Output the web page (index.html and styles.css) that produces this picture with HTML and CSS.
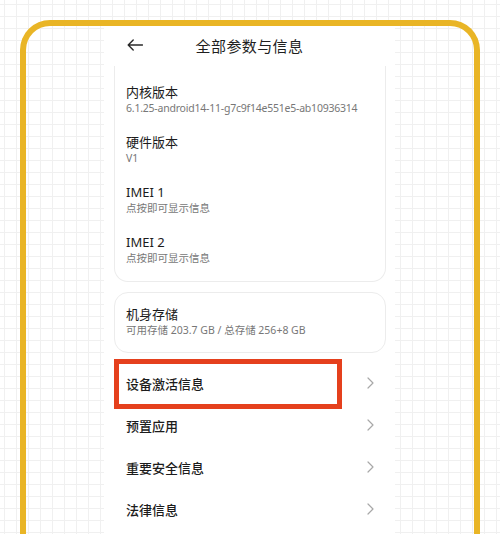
FILE: index.html
```html
<!DOCTYPE html>
<html lang="zh-CN">
<head>
<meta charset="utf-8">
<title>全部参数与信息</title>
<link rel="stylesheet" href="styles.css">
</head>
<body>
<div class="page">
  <div class="frame">
    <div class="phone">
      <header class="bar">
        <span class="back">
          <svg width="16" height="12" viewBox="0 0 16 12"><path d="M15.5 6H1.2M6.2 1L1.2 6l5 5" fill="none" stroke="#2a2a2a" stroke-width="1.4" stroke-linecap="round" stroke-linejoin="round"/></svg>
        </span>
        <h1 class="title">全部参数与信息</h1>
        <span></span>
      </header>

      <section class="card card-top">
        <div class="row"><div class="r-title">内核版本</div><div class="r-sub tight">6.1.25-android14-11-g7c9f14e551e5-ab10936314</div></div>
        <div class="row"><div class="r-title">硬件版本</div><div class="r-sub">V1</div></div>
        <div class="row"><div class="r-title">IMEI 1</div><div class="r-sub">点按即可显示信息</div></div>
        <div class="row"><div class="r-title">IMEI 2</div><div class="r-sub">点按即可显示信息</div></div>
      </section>

      <section class="card card-store">
        <div class="row"><div class="r-title">机身存储</div><div class="r-sub">可用存储 203.7 GB / 总存储 256+8 GB</div></div>
      </section>

      <ul class="list">
        <li class="item highlight"><span>设备激活信息</span><svg class="chev" width="7" height="12" viewBox="0 0 7 12"><path d="M1 1l5 5-5 5" fill="none" stroke="#a8a8a8" stroke-width="1.2" stroke-linecap="round" stroke-linejoin="round"/></svg><span class="mark"></span></li>
        <li class="item"><span>预置应用</span><svg class="chev" width="7" height="12" viewBox="0 0 7 12"><path d="M1 1l5 5-5 5" fill="none" stroke="#a8a8a8" stroke-width="1.2" stroke-linecap="round" stroke-linejoin="round"/></svg></li>
        <li class="item"><span>重要安全信息</span><svg class="chev" width="7" height="12" viewBox="0 0 7 12"><path d="M1 1l5 5-5 5" fill="none" stroke="#a8a8a8" stroke-width="1.2" stroke-linecap="round" stroke-linejoin="round"/></svg></li>
        <li class="item"><span>法律信息</span><svg class="chev" width="7" height="12" viewBox="0 0 7 12"><path d="M1 1l5 5-5 5" fill="none" stroke="#a8a8a8" stroke-width="1.2" stroke-linecap="round" stroke-linejoin="round"/></svg></li>
      </ul>
    </div>
  </div>
</div>
</body>
</html>
```

FILE: styles.css
```css
* { box-sizing: border-box; }
html, body {
  margin: 0;
  padding: 0;
}
body {
  width: 500px;
  height: 534px;
  overflow: hidden;
  font-family: "Noto Sans", "Noto Sans CJK SC", sans-serif;
  color: #1c1c1c;
  background-color: #ffffff;
  background-image:
    linear-gradient(#f0f0f0 1px, transparent 1px),
    linear-gradient(90deg, #f0f0f0 1px, transparent 1px);
  background-size: 12px 12px;
  background-position: 4px 4px;
}
.page {
  height: 534px;
  overflow: hidden;
  padding: 20px 0 0 20px;
}
.frame {
  width: 460px;
  height: 560px;
  border: 6px solid #e9b526;
  border-bottom: 0;
  border-radius: 30px 30px 0 0;
  padding-left: 78px;
}
.phone {
  width: 291px;
  height: 540px;
  background: #ffffff;
}
.bar {
  height: 38px;
  display: grid;
  grid-template-columns: 1fr auto 1fr;
  align-items: center;
}
.back {
  padding-left: 23px;
  display: flex;
  align-items: center;
}
.title {
  margin: 0;
  font-size: 15px;
  font-weight: 400;
  color: #1f1f1f;
  letter-spacing: 0.4px;
}
.card {
  margin: 0 9px 0 10px;
  border: 1px solid #ececec;
  border-radius: 14px;
  padding: 13px 11px 15px;
}
.card-top {
  margin-top: 2px;
  border-top: 0;
  border-radius: 0 0 14px 14px;
  padding-top: 18px;
  padding-bottom: 16px;
  display: flex;
  flex-direction: column;
  gap: 19px;
}
.card-store {
  margin-top: 10px;
}
.r-title {
  font-size: 13px;
  line-height: 17px;
  color: #1c1c1c;
}
.r-sub {
  font-size: 10.5px;
  line-height: 14px;
  color: #777777;
  white-space: nowrap;
}
.tight {
  letter-spacing: -0.22px;
}
.list {
  list-style: none;
  margin: 9px 9px 0 10px;
  padding: 0;
}
.item {
  position: relative;
  height: 42px;
  display: flex;
  align-items: center;
  justify-content: space-between;
  padding: 0 12px 0 12px;
  font-size: 13px;
  font-weight: 500;
  color: #1c1c1c;
}
.mark {
  position: absolute;
  left: 0;
  top: -3px;
  width: 228px;
  height: 50px;
  border: 5px solid #e5401d;
}
```
